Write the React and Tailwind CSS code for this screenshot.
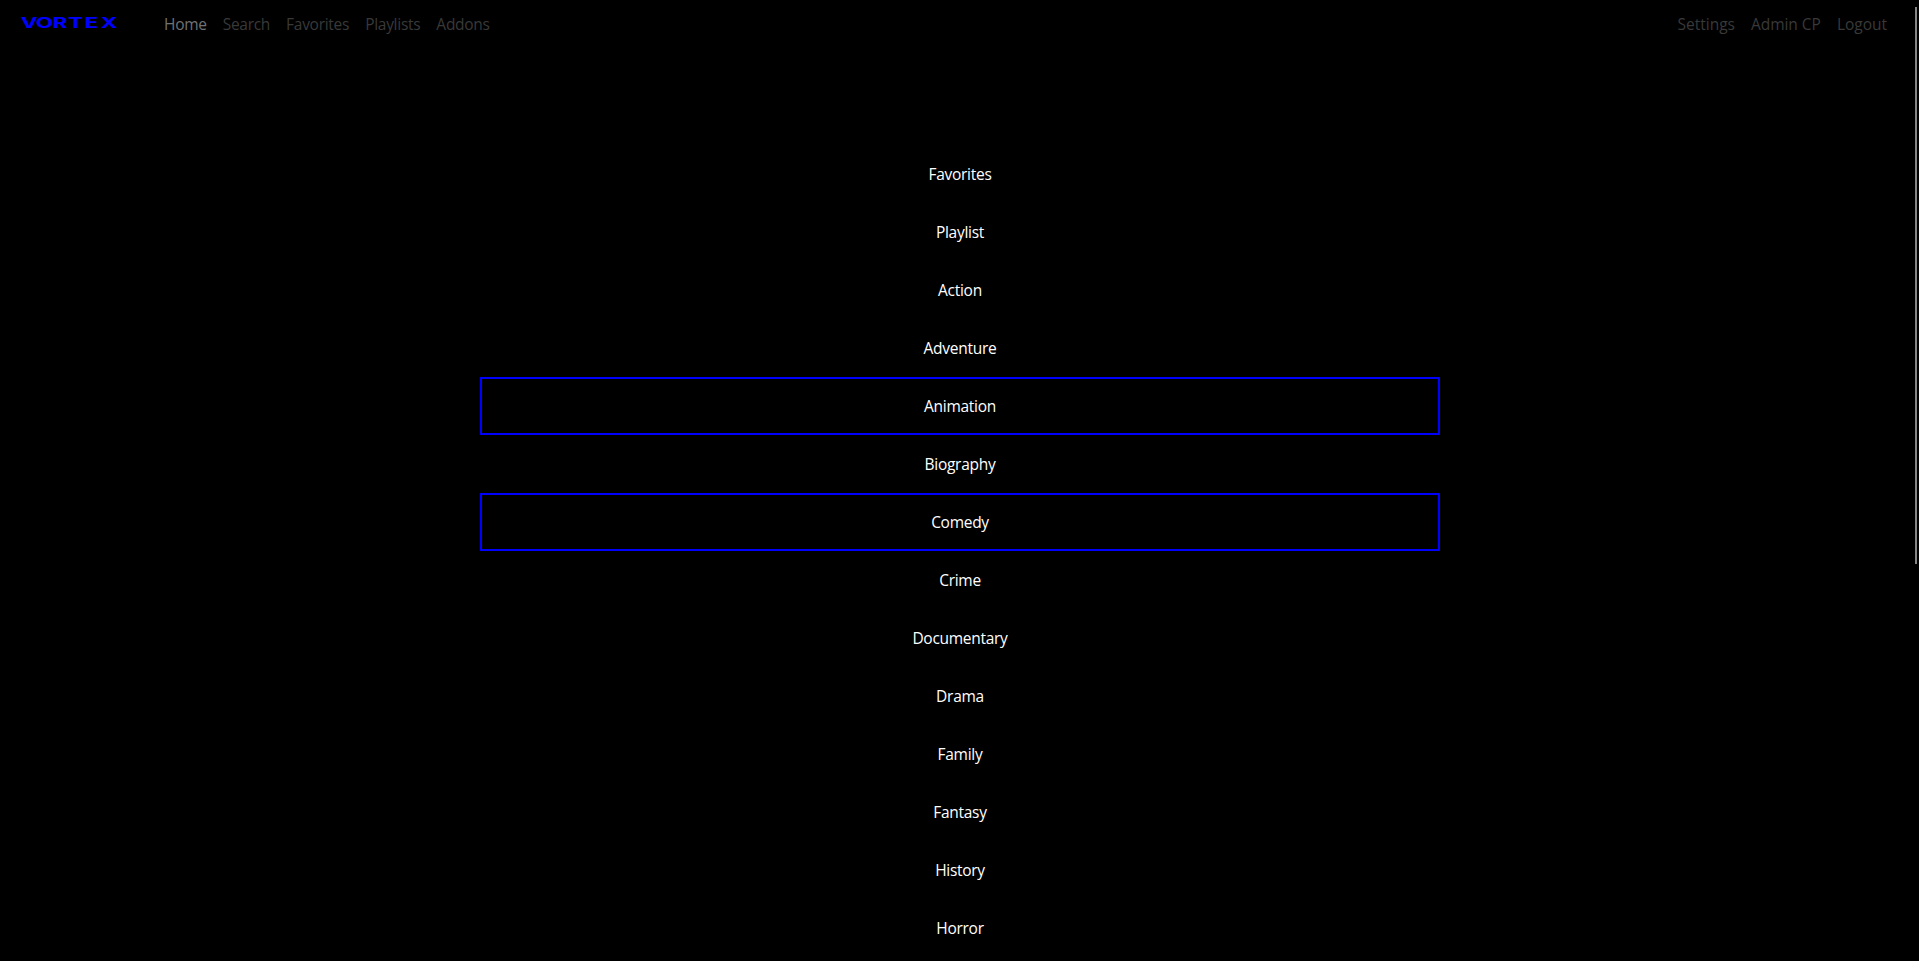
const leftLinks = ['Search', 'Favorites', 'Playlists', 'Addons'];
const rightLinks = ['Settings', 'Admin CP', 'Logout'];
const categories = [
  'Favorites', 'Playlist', 'Action', 'Adventure', 'Animation', 'Biography', 'Comedy',
  'Crime', 'Documentary', 'Drama', 'Family', 'Fantasy', 'History', 'Horror',
];
const outlined = ['Animation', 'Comedy'];

function Logo() {
  return (
    <svg className="h-6 w-[100px]" viewBox="0 0 100 24" role="img" aria-label="Vortex">
      <text
        transform="scale(1.5 1)"
        x="0.5 10.5 21.6 32 43 53.8" y="16.2"
        className="fill-[#0000ff] font-['Inter'] text-[15px] font-bold tracking-normal"
      >
        VORTEX
      </text>
    </svg>
  );
}

export default function App() {
  return (
    <div className="flex h-[961px] w-full flex-col overflow-hidden bg-black font-['Open_Sans','Noto_Sans',sans-serif] text-[15.5px] leading-6 tracking-[-0.28px]">
      <div className="flex flex-1 overflow-hidden">
        <div className="flex flex-1 flex-col">
          <nav className="flex h-12 shrink-0 items-center pl-5 pr-7">
            <Logo />
            <div className="ml-[44px] flex gap-4 text-[#393939]">
              <span className="text-[#707274]">Home</span>
              {leftLinks.map((label) => <span key={label}>{label}</span>)}
            </div>
            <div className="ml-auto flex gap-4 tracking-[-0.02px] text-[#393939]">
              {rightLinks.map((label) => <span key={label}>{label}</span>)}
            </div>
          </nav>
          <ul className="ml-[480px] mt-[97px] w-[960px]">
            {categories.map((name) => (
              <li
                key={name}
                className={`flex h-[58px] items-center justify-center border-2 text-white ${outlined.includes(name) ? 'border-[#0000ff]' : 'border-transparent'}`}
              >
                {name}
              </li>
            ))}
          </ul>
        </div>
        <div className="mt-[7px] mr-0.5 h-[557px] w-0.5 bg-[#858585]" />
      </div>
    </div>
  );
}
